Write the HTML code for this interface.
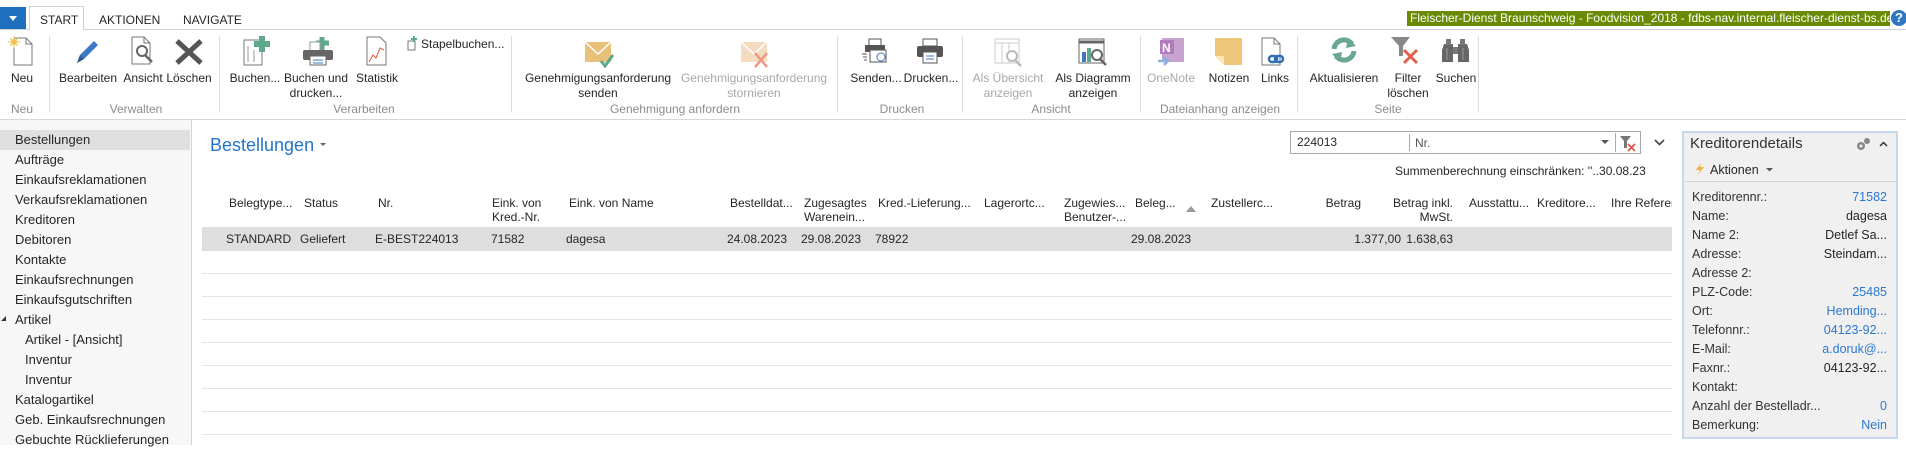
<!DOCTYPE html>
<html><head><meta charset="utf-8">
<style>
*{margin:0;padding:0;box-sizing:border-box}
body{width:1906px;height:445px;overflow:hidden;background:#fff;font-family:"Liberation Sans",sans-serif;font-size:12px;color:#262626;position:relative}
.a{position:absolute;white-space:nowrap}
.c{transform:translateX(-50%);text-align:center;line-height:15px}
.r{text-align:right}
.gl{color:#8c8c8c}
.dis{color:#a8a8a8}
.sep{position:absolute;top:36px;width:1px;height:76px;background:#dcdcdc}
.nav{position:absolute;left:15px;height:20px;line-height:20px;font-size:13px}
.hl{position:absolute;left:202px;width:1470px;height:1px;background:#e6e6e6}
.lab{position:absolute;left:1692px;color:#333;font-size:12.5px}
.val{position:absolute;right:19px;text-align:right}
.lnk{color:#2b78d0}
.pv{font-size:12.5px}
</style></head><body>
<!-- top bar -->
<div class="a" style="left:0;top:7px;width:26px;height:22px;background:#1f6fbf"></div>
<svg class="a" style="left:8px;top:15px" width="10" height="7"><path d="M1 1 L9 1 L5 6Z" fill="#fff"/></svg>
<div class="a" style="left:29px;top:6px;width:55px;height:24px;border:1px solid #d0d0d0;border-bottom:none;background:#fff"></div>
<div class="a" style="left:0;top:29px;width:1906px;height:1px;background:#d0d0d0"></div>
<div class="a" style="left:30px;top:29px;width:53px;height:1px;background:#fff"></div>
<div class="a" style="left:40px;top:13px">START</div>
<div class="a" style="left:99px;top:13px">AKTIONEN</div>
<div class="a" style="left:183px;top:13px">NAVIGATE</div>
<div class="a" style="left:1407px;top:11px;width:483px;height:15px;background:#6b8a04;color:#fff;line-height:15px;padding-left:3px;font-size:12px">Fleischer-Dienst Braunschweig - Foodvision_2018 - fdbs-nav.internal.fleischer-dienst-bs.de</div>
<div class="a" style="left:1891px;top:10px;width:16px;height:16px;border-radius:50%;background:#2f76c4;color:#fff;font-weight:bold;text-align:center;line-height:16px;font-size:13px">?</div>

<!-- ribbon icons -->
<svg class="a" style="left:8px;top:36px" width="26" height="30"><path d="M6 2 H18 L24 8 V29 H6Z" fill="#fff" stroke="#777"/><path d="M18 2 V8 H24" fill="none" stroke="#777"/><circle cx="6" cy="6" r="3" fill="#f2c14e"/><path d="M6 0V12M0 6H12M2 2L10 10M10 2L2 10" stroke="#f2c14e" stroke-width="1"/></svg>
<svg class="a" style="left:74px;top:38px" width="26" height="28"><path d="M3 25 L6 17 L20 3 L24 7 L10 21Z" fill="#3b79c4"/><path d="M3 25 L6 17 L10 21Z" fill="#2c5a94"/></svg>
<svg class="a" style="left:130px;top:36px" width="28" height="30"><path d="M2 1 H14 L20 7 V28 H2Z" fill="#fff" stroke="#777"/><path d="M14 1V7H20" fill="none" stroke="#777"/><circle cx="12" cy="15" r="5" fill="none" stroke="#666" stroke-width="2"/><path d="M15 19L22 26" stroke="#666" stroke-width="2.5"/></svg>
<svg class="a" style="left:174px;top:38px" width="30" height="28"><path d="M3 3L27 25M27 3L3 25" stroke="#555" stroke-width="5"/></svg>
<svg class="a" style="left:242px;top:36px" width="30" height="30"><path d="M2 4H20V29H2Z" fill="#fff" stroke="#777"/><path d="M6 10V26M12 14V26" stroke="#999"/><path d="M20 0V16M12 8H28" stroke="#5fa88a" stroke-width="6"/></svg>
<svg class="a" style="left:302px;top:36px" width="34" height="30"><path d="M20 1V14M14 7H27" stroke="#5fa88a" stroke-width="5"/><path d="M8 6H18V16H8Z" fill="#fff" stroke="#999"/><rect x="1" y="14" width="30" height="10" rx="2" fill="#666"/><rect x="8" y="20" width="16" height="9" fill="#fff" stroke="#666"/><path d="M11 24H21M11 27H21" stroke="#3b79c4"/></svg>
<svg class="a" style="left:366px;top:36px" width="22" height="30"><path d="M1 1H14L20 7V29H1Z" fill="#fff" stroke="#777"/><path d="M3 26L7 19L10 22L14 12L18 14" fill="none" stroke="#e05a3a"/></svg>
<svg class="a" style="left:405px;top:36px" width="14" height="15"><path d="M3 5H10V14H3Z" fill="#fff" stroke="#777"/><path d="M9 0V6M6 3H12" stroke="#5fa88a" stroke-width="2"/></svg>
<svg class="a" style="left:584px;top:40px" width="30" height="28"><path d="M1 2H27V22H1Z" fill="#e8c07a"/><path d="M1 2L14 14L27 2" fill="none" stroke="#fff" stroke-width="1.5"/><path d="M17 21L21 26L29 15" fill="none" stroke="#5fa88a" stroke-width="3"/></svg>
<svg class="a" style="left:740px;top:40px" width="30" height="28"><path d="M1 2H27V22H1Z" fill="#f5dcc0"/><path d="M1 2L14 14L27 2" fill="none" stroke="#fff" stroke-width="1.5"/><path d="M15 13L27 27M27 13L15 27" stroke="#ec9a86" stroke-width="2.5"/></svg>
<svg class="a" style="left:862px;top:38px" width="28" height="28"><path d="M7 1H19V8H7Z" fill="#fff" stroke="#555"/><rect x="3" y="7" width="20" height="7" fill="#555"/><rect x="8" y="12" width="16" height="12" fill="#fff" stroke="#555"/><circle cx="19" cy="19" r="4" fill="none" stroke="#3b79c4"/><path d="M0 16H5M1 19H5M2 22H5" stroke="#555"/></svg>
<svg class="a" style="left:916px;top:38px" width="28" height="28"><path d="M7 1H21V8H7Z" fill="#fff" stroke="#555"/><rect x="1" y="8" width="26" height="11" rx="2" fill="#555"/><rect x="7" y="14" width="14" height="11" fill="#fff" stroke="#555"/><path d="M10 18H18M10 21H18" stroke="#3b79c4"/></svg>
<svg class="a" style="left:994px;top:38px" width="30" height="30"><rect x="1" y="1" width="24" height="24" fill="#fff" stroke="#ccc"/><path d="M1 5H25M8 5V25M15 5V25" stroke="#ccc"/><circle cx="18" cy="18" r="5" fill="#fff" stroke="#bbb" stroke-width="2"/><path d="M21 22L27 28" stroke="#bbb" stroke-width="2.5"/></svg>
<svg class="a" style="left:1078px;top:38px" width="30" height="30"><rect x="1" y="1" width="25" height="24" fill="#fff" stroke="#666"/><path d="M1 4H26" stroke="#666" stroke-width="3"/><rect x="4" y="14" width="4" height="10" fill="#3b79c4"/><rect x="9" y="10" width="4" height="14" fill="#5fa88a"/><circle cx="19" cy="17" r="5" fill="#fff" stroke="#666" stroke-width="2"/><path d="M22 21L28 27" stroke="#666" stroke-width="2.5"/></svg>
<svg class="a" style="left:1157px;top:37px" width="30" height="30"><rect x="5" y="1" width="22" height="24" fill="#c9a3d0"/><rect x="3" y="3" width="14" height="14" fill="#b07cbd"/><text x="5" y="15" font-size="12" font-weight="bold" fill="#fff" font-family="Liberation Sans">N</text><path d="M1 24H10M7 20L11 24L7 28" stroke="#8fb0dc" stroke-width="2.5" fill="none"/></svg>
<svg class="a" style="left:1214px;top:37px" width="30" height="30"><path d="M1 1H28V28H10L1 19Z" fill="#eec67a"/><path d="M1 19H10V28Z" fill="#fbe6b8"/></svg>
<svg class="a" style="left:1260px;top:37px" width="28" height="30"><path d="M2 1H14L20 7V28H2Z" fill="#fff" stroke="#777"/><path d="M14 1V7H20" fill="none" stroke="#777"/><rect x="9" y="19" width="8" height="6" rx="3" fill="none" stroke="#2f6fb8" stroke-width="2.5"/><rect x="15" y="19" width="8" height="6" rx="3" fill="none" stroke="#2f6fb8" stroke-width="2.5"/></svg>
<svg class="a" style="left:1330px;top:36px" width="28" height="28"><path d="M4 13A10 10 0 0 1 22 8" fill="none" stroke="#6aa791" stroke-width="5"/><path d="M18 2L26 10L16 12Z" fill="#6aa791"/><path d="M24 15A10 10 0 0 1 6 20" fill="none" stroke="#6aa791" stroke-width="5"/><path d="M10 26L2 18L12 16Z" fill="#6aa791"/></svg>
<svg class="a" style="left:1390px;top:36px" width="34" height="30"><path d="M1 1H20L13 10V20H9V10Z" fill="#888"/><path d="M14 14L27 27M27 14L14 27" stroke="#e06048" stroke-width="3"/></svg>
<svg class="a" style="left:1441px;top:38px" width="30" height="26"><path d="M3 6H12V24H1V12Z" fill="#666"/><path d="M17 6H26L28 12V24H17Z" fill="#666"/><rect x="12" y="9" width="5" height="7" fill="#777"/><rect x="5" y="1" width="5" height="6" fill="#777"/><rect x="19" y="1" width="5" height="6" fill="#777"/><path d="M6 10V22M22 10V22" stroke="#999"/></svg>

<!-- ribbon labels -->
<div class="a c" style="left:22px;top:71px">Neu</div>
<div class="sep" style="left:49px"></div>
<div class="a c" style="left:88px;top:71px">Bearbeiten</div>
<div class="a c" style="left:143px;top:71px">Ansicht</div>
<div class="a c" style="left:189px;top:71px">Löschen</div>
<div class="sep" style="left:219px"></div>
<div class="a c" style="left:255px;top:71px">Buchen...</div>
<div class="a c" style="left:316px;top:71px">Buchen und<br>drucken...</div>
<div class="a c" style="left:377px;top:71px">Statistik</div>
<div class="a" style="left:421px;top:37px">Stapelbuchen...</div>
<div class="sep" style="left:511px"></div>
<div class="a c" style="left:598px;top:71px">Genehmigungsanforderung<br>senden</div>
<div class="a c dis" style="left:754px;top:71px">Genehmigungsanforderung<br>stornieren</div>
<div class="sep" style="left:837px"></div>
<div class="a c" style="left:876px;top:71px">Senden...</div>
<div class="a c" style="left:931px;top:71px">Drucken...</div>
<div class="sep" style="left:962px"></div>
<div class="a c dis" style="left:1008px;top:71px">Als Übersicht<br>anzeigen</div>
<div class="a c" style="left:1093px;top:71px">Als Diagramm<br>anzeigen</div>
<div class="sep" style="left:1140px"></div>
<div class="a c dis" style="left:1171px;top:71px">OneNote</div>
<div class="a c" style="left:1229px;top:71px">Notizen</div>
<div class="a c" style="left:1275px;top:71px">Links</div>
<div class="sep" style="left:1297px"></div>
<div class="a c" style="left:1344px;top:71px">Aktualisieren</div>
<div class="a c" style="left:1408px;top:71px">Filter<br>löschen</div>
<div class="a c" style="left:1456px;top:71px">Suchen</div>
<div class="sep" style="left:1478px"></div>
<div class="a c gl" style="left:22px;top:102px">Neu</div>
<div class="a c gl" style="left:136px;top:102px">Verwalten</div>
<div class="a c gl" style="left:364px;top:102px">Verarbeiten</div>
<div class="a c gl" style="left:675px;top:102px">Genehmigung anfordern</div>
<div class="a c gl" style="left:902px;top:102px">Drucken</div>
<div class="a c gl" style="left:1051px;top:102px">Ansicht</div>
<div class="a c gl" style="left:1220px;top:102px">Dateianhang anzeigen</div>
<div class="a c gl" style="left:1388px;top:102px">Seite</div>
<div class="a" style="left:0;top:119px;width:1906px;height:1px;background:#d6d6d6"></div>

<!-- left nav -->
<div class="a" style="left:0;top:120px;width:191px;height:325px;background:#f7f7f7"></div>
<div class="a" style="left:191px;top:120px;width:1px;height:325px;background:#d6d6d6"></div>
<div class="a" style="left:0;top:130px;width:190px;height:20px;background:#e0e0e0"></div>
<div class="nav" style="top:130px">Bestellungen</div>
<div class="nav" style="top:150px">Aufträge</div>
<div class="nav" style="top:170px">Einkaufsreklamationen</div>
<div class="nav" style="top:190px">Verkaufsreklamationen</div>
<div class="nav" style="top:210px">Kreditoren</div>
<div class="nav" style="top:230px">Debitoren</div>
<div class="nav" style="top:250px">Kontakte</div>
<div class="nav" style="top:270px">Einkaufsrechnungen</div>
<div class="nav" style="top:290px">Einkaufsgutschriften</div>
<svg class="a" style="left:1px;top:316px" width="6" height="6"><path d="M5 0V5H0Z" fill="#333"/></svg>
<div class="nav" style="top:310px">Artikel</div>
<div class="nav" style="top:330px;left:25px">Artikel - [Ansicht]</div>
<div class="nav" style="top:350px;left:25px">Inventur</div>
<div class="nav" style="top:370px;left:25px">Inventur</div>
<div class="nav" style="top:390px">Katalogartikel</div>
<div class="nav" style="top:410px">Geb. Einkaufsrechnungen</div>
<div class="nav" style="top:430px">Gebuchte Rücklieferungen</div>

<!-- main -->
<div class="a" style="left:210px;top:135px;font-size:18px;color:#2374cc">Bestellungen</div>
<svg class="a" style="left:320px;top:143px" width="6" height="4"><path d="M0 0H6L3 3Z" fill="#666"/></svg>
<div class="a" style="left:1290px;top:131px;width:351px;height:23px;border:1px solid #a8a8a8;background:#fff"></div>
<div class="a" style="left:1297px;top:135px">224013</div>
<div class="a" style="left:1409px;top:134px;width:1px;height:17px;background:#aaa"></div>
<div class="a" style="left:1415px;top:136px;color:#555">Nr.</div>
<svg class="a" style="left:1601px;top:140px" width="8" height="5"><path d="M0 0H8L4 4Z" fill="#555"/></svg>
<div class="a" style="left:1615px;top:133px;width:1px;height:19px;background:#aaa"></div>
<svg class="a" style="left:1619px;top:134px" width="18" height="18"><path d="M1 2H12L8 7V14H5V7Z" fill="#777"/><path d="M9 10L16 17M16 10L9 17" stroke="#e05040" stroke-width="1.6"/></svg>
<svg class="a" style="left:1654px;top:139px" width="11" height="7"><path d="M1 1L5.5 5.5L10 1" fill="none" stroke="#444" stroke-width="1.6"/></svg>
<div class="a" style="left:1395px;top:164px">Summenberechnung einschränken: ''..30.08.23</div>

<div class="a" style="left:229px;top:196px">Belegtype...</div>
<div class="a" style="left:304px;top:196px">Status</div>
<div class="a" style="left:378px;top:196px">Nr.</div>
<div class="a" style="left:492px;top:196px;line-height:14px">Eink. von<br>Kred.-Nr.</div>
<div class="a" style="left:569px;top:196px">Eink. von Name</div>
<div class="a" style="left:730px;top:196px">Bestelldat...</div>
<div class="a" style="left:804px;top:196px;line-height:14px">Zugesagtes<br>Warenein...</div>
<div class="a" style="left:878px;top:196px">Kred.-Lieferung...</div>
<div class="a" style="left:984px;top:196px">Lagerortc...</div>
<div class="a" style="left:1064px;top:196px;line-height:14px">Zugewies...<br>Benutzer-...</div>
<div class="a" style="left:1135px;top:196px">Beleg...</div>
<svg class="a" style="left:1186px;top:206px" width="10" height="6"><path d="M0 6L5 0L10 6Z" fill="#999"/></svg>
<div class="a" style="left:1211px;top:196px">Zustellerc...</div>
<div class="a r" style="right:545px;top:196px">Betrag</div>
<div class="a r" style="right:453px;top:196px;line-height:14px">Betrag inkl.<br>MwSt.</div>
<div class="a" style="left:1469px;top:196px">Ausstattu...</div>
<div class="a" style="left:1537px;top:196px">Kreditore...</div>
<div class="a" style="left:1611px;top:196px;width:61px;overflow:hidden">Ihre Referenz</div>

<div class="a" style="left:202px;top:227px;width:1470px;height:24px;background:#dedede"></div>
<div class="a" style="left:226px;top:232px">STANDARD</div>
<div class="a" style="left:300px;top:232px">Geliefert</div>
<div class="a" style="left:375px;top:232px">E-BEST224013</div>
<div class="a" style="left:491px;top:232px">71582</div>
<div class="a" style="left:566px;top:232px">dagesa</div>
<div class="a" style="left:727px;top:232px">24.08.2023</div>
<div class="a" style="left:801px;top:232px">29.08.2023</div>
<div class="a" style="left:875px;top:232px">78922</div>
<div class="a" style="left:1131px;top:232px">29.08.2023</div>
<div class="a r" style="right:505px;top:232px">1.377,00</div>
<div class="a r" style="right:453px;top:232px">1.638,63</div>
<div class="hl" style="top:273px"></div>
<div class="hl" style="top:296px"></div>
<div class="hl" style="top:319px"></div>
<div class="hl" style="top:342px"></div>
<div class="hl" style="top:365px"></div>
<div class="hl" style="top:388px"></div>
<div class="hl" style="top:411px"></div>
<div class="hl" style="top:434px"></div>

<!-- right panel -->
<div class="a" style="left:1682px;top:131px;width:216px;height:308px;background:#f0f0f0;border:2px solid #c6d8ec"></div>
<div class="a" style="left:1690px;top:135px;font-size:15px;color:#333">Kreditorendetails</div>
<svg class="a" style="left:1855px;top:136px" width="16" height="16"><circle cx="6" cy="10" r="4" fill="#888"/><circle cx="12" cy="5" r="3" fill="#888"/><circle cx="6" cy="10" r="1.5" fill="#f0f0f0"/></svg>
<svg class="a" style="left:1879px;top:141px" width="9" height="6"><path d="M1 5L4.5 1.5L8 5" fill="none" stroke="#333" stroke-width="1.5"/></svg>
<svg class="a" style="left:1695px;top:163px" width="10" height="12"><path d="M6 0L1 7H5L3 12L9 4H5Z" fill="#f0b34a"/></svg>
<div class="a" style="left:1710px;top:163px;font-size:12.5px">Aktionen</div>
<svg class="a" style="left:1766px;top:168px" width="7" height="4"><path d="M0 0H7L3.5 3.5Z" fill="#555"/></svg>
<div class="a" style="left:1685px;top:181px;width:211px;height:1px;background:#d4d4d4"></div>
<div class="lab a" style="top:190px">Kreditorennr.:</div><div class="a r lnk pv" style="right:19px;top:190px">71582</div>
<div class="lab a" style="top:209px">Name:</div><div class="a r pv" style="right:19px;top:209px">dagesa</div>
<div class="lab a" style="top:228px">Name 2:</div><div class="a r pv" style="right:19px;top:228px">Detlef Sa...</div>
<div class="lab a" style="top:247px">Adresse:</div><div class="a r pv" style="right:19px;top:247px">Steindam...</div>
<div class="lab a" style="top:266px">Adresse 2:</div>
<div class="lab a" style="top:285px">PLZ-Code:</div><div class="a r lnk pv" style="right:19px;top:285px">25485</div>
<div class="lab a" style="top:304px">Ort:</div><div class="a r lnk pv" style="right:19px;top:304px">Hemding...</div>
<div class="lab a" style="top:323px">Telefonnr.:</div><div class="a r lnk pv" style="right:19px;top:323px">04123-92...</div>
<div class="lab a" style="top:342px">E-Mail:</div><div class="a r lnk pv" style="right:19px;top:342px">a.doruk@...</div>
<div class="lab a" style="top:361px">Faxnr.:</div><div class="a r pv" style="right:19px;top:361px">04123-92...</div>
<div class="lab a" style="top:380px">Kontakt:</div>
<div class="lab a" style="top:399px">Anzahl der Bestelladr...</div><div class="a r lnk pv" style="right:19px;top:399px">0</div>
<div class="lab a" style="top:418px">Bemerkung:</div><div class="a r lnk pv" style="right:19px;top:418px">Nein</div>
</body></html>
